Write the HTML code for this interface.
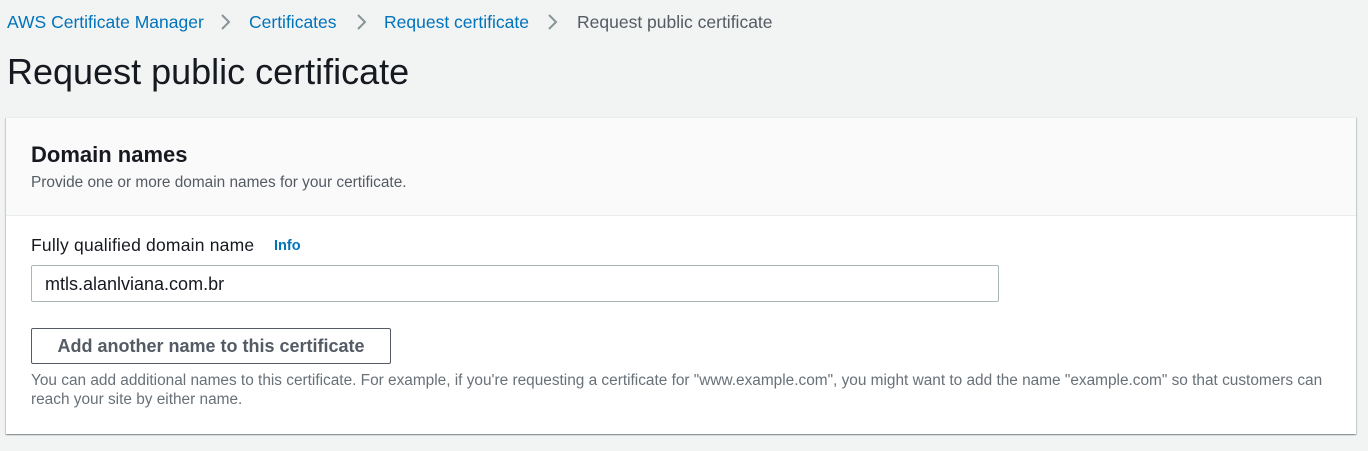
<!DOCTYPE html>
<html><head><style>
body{margin:0;width:1368px;height:451px;background:#f2f3f3;font-family:"Liberation Sans",sans-serif;position:relative;overflow:hidden;color:#16191f}
.a{position:absolute;white-space:nowrap}
.bc{top:12px;font-size:17.5px;color:#0073bb}
.sep{top:12px}
.card{position:absolute;left:6px;top:117px;width:1350px;height:316px;background:#fff;box-shadow:0 1px 1px rgba(0,28,36,.3),1px 1px 1px rgba(0,28,36,.15),-1px 1px 1px rgba(0,28,36,.15);border-top:1px solid #eaeded}
.hd{position:absolute;left:0;top:0;width:1350px;height:97px;background:#fafafa;border-bottom:1px solid #eaeded}
</style></head><body>
<div class="a bc" style="left:7px">AWS Certificate Manager</div>
<svg class="a sep" style="left:219px" width="14" height="20" viewBox="0 0 14 20"><path d="M3 3l7 7-7 7" fill="none" stroke="#879596" stroke-width="2"/></svg>
<div class="a bc" style="left:249px">Certificates</div>
<svg class="a sep" style="left:355px" width="14" height="20" viewBox="0 0 14 20"><path d="M3 3l7 7-7 7" fill="none" stroke="#879596" stroke-width="2"/></svg>
<div class="a bc" style="left:384px">Request certificate</div>
<svg class="a sep" style="left:546px" width="14" height="20" viewBox="0 0 14 20"><path d="M3 3l7 7-7 7" fill="none" stroke="#879596" stroke-width="2"/></svg>
<div class="a bc" style="left:577px;color:#545b64">Request public certificate</div>
<div class="a" style="left:7px;top:51px;font-size:36px">Request public certificate</div>
<div class="card">
<div class="hd"></div>
<div class="a" style="left:25px;top:24px;font-size:22px;font-weight:bold">Domain names</div>
<div class="a" style="left:25px;top:56px;font-size:15.4px;color:#545b64">Provide one or more domain names for your certificate.</div>
<div class="a" style="left:25px;top:117px;font-size:17.5px;letter-spacing:0.2px">Fully qualified domain name</div>
<div class="a" style="left:268px;top:120px;color:#0073bb;font-weight:bold;font-size:14.5px">Info</div>
<div class="a" style="left:25px;top:147px;width:966px;height:35px;border:1px solid #aab7b8;border-radius:2px"></div>
<div class="a" style="left:39px;top:156px;font-size:18px">mtls.alanlviana.com.br</div>
<div class="a" style="left:25px;top:210px;width:358px;height:34px;border:1px solid #545b64;border-radius:2px;text-align:center;line-height:34px;font-weight:bold;font-size:18px;color:#545b64">Add another name to this certificate</div>
<div class="a" style="left:25px;top:253px;font-size:15.4px;color:#687078;line-height:19px">You can add additional names to this certificate. For example, if you're requesting a certificate for "www.example.com", you might want to add the name "example.com" so that customers can<br>reach your site by either name.</div>
</div>
</body></html>
